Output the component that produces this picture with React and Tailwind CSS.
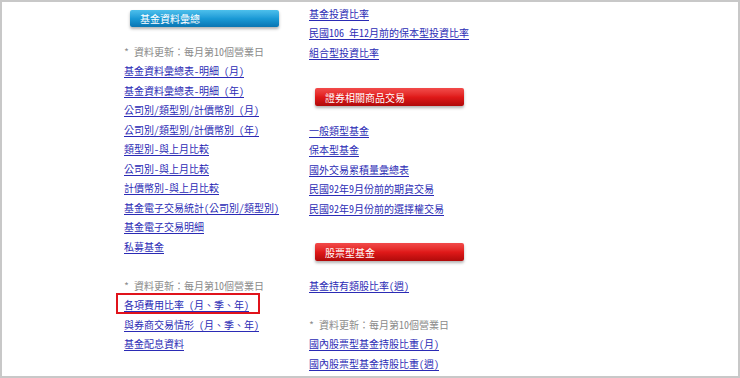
import React from "react";

const font = {
  fontFamily: '"Noto Sans Mono CJK TC", "Noto Sans CJK TC", "Liberation Sans", sans-serif',
};

const Note = () => (
  <div className="h-[19.5px] flex items-center text-[10px] text-[#8a8a8a] whitespace-nowrap">
    * 資料更新：每月第10個營業日
  </div>
);

const LinkRow = ({ children, boxed }) => (
  <div className="h-[19.5px] flex items-center whitespace-nowrap">
    <a href="#" className="relative text-[10px] text-[#2b2bb5] underline underline-offset-2">
      {children}
      {boxed && (
        <span className="absolute -left-[8px] -right-[11px] -top-[4px] h-[21px] border-2 border-[#e0131b]" />
      )}
    </a>
  </div>
);

const Blank = () => <div className="h-[19.5px]" />;

const BlueHeader = ({ children }) => (
  <div className="ml-[6px] w-[149px] h-[17px] flex items-center pl-[10px] rounded-[2px] bg-gradient-to-b from-[#4cc0ec] via-[#1a9ad6] to-[#0a75b2] shadow-[0_2px_3px_rgba(0,0,0,0.3)] text-white text-[10px]">
    {children}
  </div>
);

const RedHeader = ({ children }) => (
  <div className="ml-[6px] w-[149px] h-[18px] flex items-center pl-[10px] rounded-[2px] bg-gradient-to-b from-[#f24a4a] via-[#e01919] to-[#b00a0a] shadow-[0_2px_3px_rgba(0,0,0,0.3)] text-white text-[10px]">
    {children}
  </div>
);

export default function App() {
  return (
    <div style={font} className="w-[740px] h-[378px] bg-white border-2 border-[#c8c8c8] overflow-hidden">
      <div className="flex">
        {/* left column */}
        <div className="ml-[122px] w-[185px] flex flex-col pt-[8px]">
          <BlueHeader>基金資料彙總</BlueHeader>
          <div className="h-[14.25px]" />
          <Note />
          <LinkRow>基金資料彙總表-明細 (月)</LinkRow>
          <LinkRow>基金資料彙總表-明細 (年)</LinkRow>
          <LinkRow>公司別/類型別/計價幣別 (月)</LinkRow>
          <LinkRow>公司別/類型別/計價幣別 (年)</LinkRow>
          <LinkRow>類型別-與上月比較</LinkRow>
          <LinkRow>公司別-與上月比較</LinkRow>
          <LinkRow>計價幣別-與上月比較</LinkRow>
          <LinkRow>基金電子交易統計(公司別/類型別)</LinkRow>
          <LinkRow>基金電子交易明細</LinkRow>
          <LinkRow>私募基金</LinkRow>
          <Blank />
          <Note />
          <LinkRow boxed>各項費用比率 (月、季、年)</LinkRow>
          <LinkRow>與券商交易情形 (月、季、年)</LinkRow>
          <LinkRow>基金配息資料</LinkRow>
        </div>

        {/* right column */}
        <div className="w-[200px] flex flex-col pt-[1.25px]">
          <LinkRow>基金投資比率</LinkRow>
          <LinkRow>民國106 年12月前的保本型投資比率</LinkRow>
          <LinkRow>組合型投資比率</LinkRow>
          <div className="h-[26.25px]" />
          <RedHeader>證券相關商品交易</RedHeader>
          <div className="h-[14.25px]" />
          <LinkRow>一般類型基金</LinkRow>
          <LinkRow>保本型基金</LinkRow>
          <LinkRow>國外交易累積量彙總表</LinkRow>
          <LinkRow>民國92年9月份前的期貨交易</LinkRow>
          <LinkRow>民國92年9月份前的選擇權交易</LinkRow>
          <div className="h-[25.25px]" />
          <RedHeader>股票型基金</RedHeader>
          <div className="h-[14.25px]" />
          <LinkRow>基金持有類股比率(週)</LinkRow>
          <Blank />
          <Note />
          <LinkRow>國內股票型基金持股比重(月)</LinkRow>
          <LinkRow>國內股票型基金持股比重(週)</LinkRow>
        </div>
      </div>
    </div>
  );
}
